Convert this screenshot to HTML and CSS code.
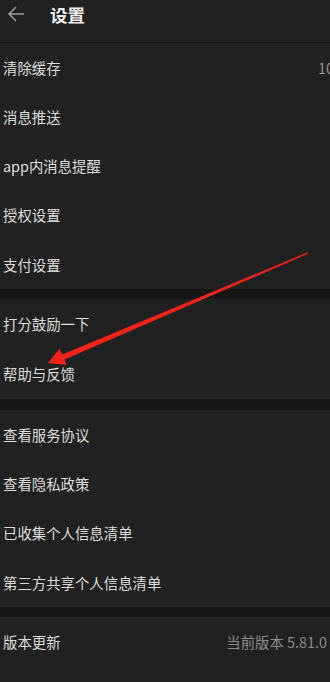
FILE: index.html
```html
<!DOCTYPE html>
<html lang="zh">
<head>
<meta charset="utf-8">
<link rel="stylesheet" href="styles.css">
</head>
<body>
<div class="page">
  <header class="header">
    <svg class="back" width="20" height="20" viewBox="0 0 20 20"><path d="M18 10H3M10 3L3 10L10 17" fill="none" stroke="#9a9a9a" stroke-width="1.6"/></svg>
    <span class="title">设置</span>
  </header>
  <section class="group">
    <div class="row"><span>清除缓存</span><span class="val">10</span></div>
    <div class="row"><span>消息推送</span></div>
    <div class="row"><span>app内消息提醒</span></div>
    <div class="row"><span>授权设置</span></div>
    <div class="row"><span>支付设置</span></div>
  </section>
  <div class="band"></div>
  <section class="group">
    <div class="row"><span>打分鼓励一下</span></div>
    <div class="row row-tall"><span>帮助与反馈</span></div>
  </section>
  <div class="band band-11"></div>
  <section class="group">
    <div class="row"><span>查看服务协议</span></div>
    <div class="row"><span>查看隐私政策</span></div>
    <div class="row"><span>已收集个人信息清单</span></div>
    <div class="row"><span>第三方共享个人信息清单</span></div>
  </section>
  <div class="band"></div>
  <section class="group">
    <div class="row"><span>版本更新</span><span class="ver">当前版本 5.81.0</span></div>
  </section>
  <svg class="arrow" width="330" height="682" viewBox="0 0 330 682">
    <polygon points="307.8,252.3 308.3,253.6 64.5,359.5 66.5,365 48,363 59.5,348.8 62.2,354.5" fill="#f2231a"/>
  </svg>
</div>
</body>
</html>
```
FILE: styles.css
```css
* { box-sizing: border-box; }
html, body { margin: 0; padding: 0; }
body {
  background: #212121;
  font-family: "Noto Sans CJK SC", "Noto Sans", sans-serif;
  color: #dedede;
  width: 330px;
  height: 682px;
  overflow: hidden;
}
.page { position: relative; width: 330px; height: 682px; }
.header {
  height: 43px;
  border-bottom: 1px solid #151515;
  display: flex;
  align-items: flex-start;
  padding: 3px 0 0 6px;
}
.back { margin-top: 1px; }
.title {
  margin-left: 24px;
  font-size: 17.5px;
  font-weight: 700;
  color: #f2f2f2;
  line-height: 24px;
}
.row {
  height: 49.25px;
  display: flex;
  align-items: center;
  justify-content: space-between;
  padding-left: 3px;
  font-size: 14.4px;
  border-bottom: 1px solid #1e1e1e;
}
.row:last-child { border-bottom: none; }
.row-tall { height: 50.5px; }
.val { margin-right: -4px; color: #9a9a9a; }
.ver { color: #8c8c8c; margin-right: 3px; }
.band { height: 10px; background: #161616; }
.band-11 { height: 11px; }
.arrow { position: absolute; left: 0; top: 0; pointer-events: none; }
```
